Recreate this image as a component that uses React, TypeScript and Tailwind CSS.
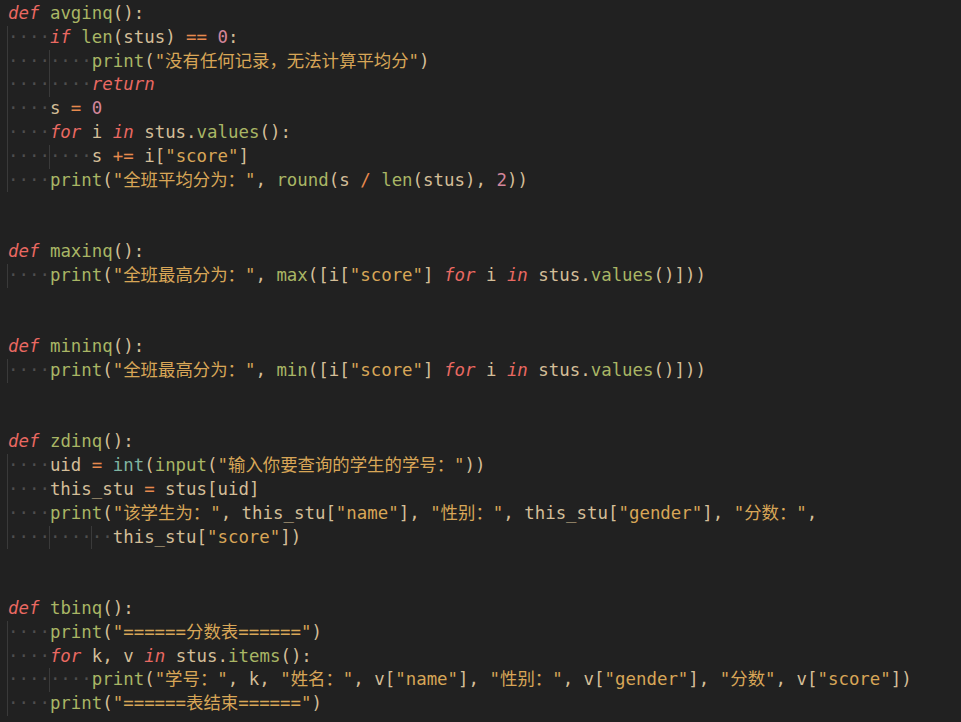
import React from "react";

const CODE = [
  'def avginq():',
  '    if len(stus) == 0:',
  '        print("没有任何记录，无法计算平均分")',
  '        return',
  '    s = 0',
  '    for i in stus.values():',
  '        s += i["score"]',
  '    print("全班平均分为：", round(s / len(stus), 2))',
  '',
  '',
  'def maxinq():',
  '    print("全班最高分为：", max([i["score"] for i in stus.values()]))',
  '',
  '',
  'def mininq():',
  '    print("全班最高分为：", min([i["score"] for i in stus.values()]))',
  '',
  '',
  'def zdinq():',
  '    uid = int(input("输入你要查询的学生的学号："))',
  '    this_stu = stus[uid]',
  '    print("该学生为：", this_stu["name"], "性别：", this_stu["gender"], "分数：",',
  '          this_stu["score"])',
  '',
  '',
  'def tbinq():',
  '    print("======分数表======")',
  '    for k, v in stus.items():',
  '        print("学号：", k, "姓名：", v["name"], "性别：", v["gender"], "分数", v["score"])',
  '    print("======表结束======")',
];

const KEYWORDS = ["def", "if", "for", "in", "return"];

const STYLES: Record<string, string> = {
  kw: "text-[#ea6962] italic",
  fn: "text-[#a9b665]",
  cls: "text-[#7fb4a2]",
  str: "text-[#d8a657]",
  num: "text-[#d3869b]",
  op: "text-[#e78a4e]",
  plain: "text-[#d4be98]",
};

type Tok = { kind: string; text: string };

// rough python highlighter, just enough for this snippet
function tokenize(src: string): Tok[] {
  const re = /("[^"]*")|(\s+)|([A-Za-z_][A-Za-z0-9_]*)|(\d+)|(==|\+=|[=\/])|(.)/g;
  const out: Tok[] = [];
  let m: RegExpExecArray | null;
  let prevWord = "";
  while ((m = re.exec(src))) {
    const [t, str, ws, word, num, op] = m;
    if (str) out.push({ kind: "str", text: t });
    else if (ws) out.push({ kind: "plain", text: t });
    else if (word) {
      const rest = src.slice(re.lastIndex).trimStart();
      let kind = "plain";
      if (KEYWORDS.includes(word)) kind = "kw";
      else if (word === "int") kind = "cls";
      else if (prevWord === "def" || rest.startsWith("(")) kind = "fn";
      out.push({ kind, text: t });
      prevWord = word;
    } else if (num) out.push({ kind: "num", text: t });
    else if (op) out.push({ kind: "op", text: t });
    else out.push({ kind: "plain", text: t });
  }
  return out;
}

function Indent({ n }: { n: number }) {
  const groups: number[] = [];
  for (let i = 0; i < n; i += 4) groups.push(Math.min(4, n - i));
  return (
    <>
      {groups.map((size, i) => (
        <span
          key={i}
          className="inline-block shadow-[inset_1px_0_0_#3a3a3a] text-[#4e4e4e] -ml-px pl-px"
        >
          {"·".repeat(size)}
        </span>
      ))}
    </>
  );
}

function CodeLine({ line }: { line: string }) {
  const body = line.trimStart();
  const indent = line.length - body.length;
  return (
    <div className="h-[23.8px] whitespace-pre">
      {indent > 0 && <Indent n={indent} />}
      {tokenize(body).map((t, i) => (
        <span key={i} className={STYLES[t.kind]}>
          {t.text}
        </span>
      ))}
    </div>
  );
}

const App = () => {
  return (
    <div
      className="min-h-screen w-full bg-[#212121] pl-2 pt-[2px] text-[17.4px] leading-[23.8px] overflow-hidden"
      style={{ fontFamily: '"DejaVu Sans Mono", "Noto Sans CJK SC", monospace' }}
    >
      {CODE.map((line, i) => (
        <CodeLine key={i} line={line} />
      ))}
    </div>
  );
};

export default App;
